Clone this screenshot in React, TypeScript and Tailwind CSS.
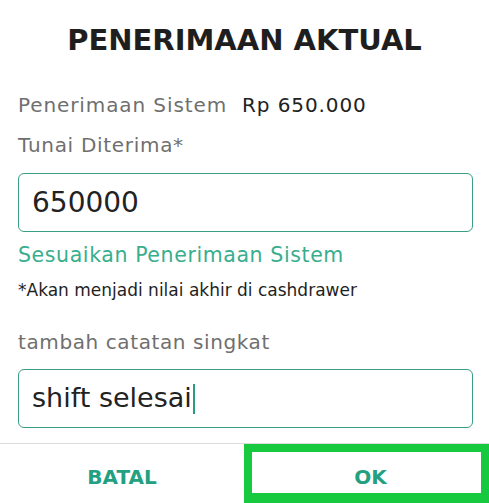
import React from "react";

export default function App() {
  const font = { fontFamily: '"DejaVu Sans", "Noto Sans", sans-serif' };
  return (
    <div className="w-[489px] h-[503px] bg-white flex flex-col overflow-hidden" style={font}>
      <div className="h-[85px] flex items-start justify-center pt-[26px]">
        <h1 className="text-[29px] leading-none font-bold text-[#1e1e1e]">PENERIMAAN AKTUAL</h1>
      </div>
      <div className="pl-[18px] pr-[16px] flex flex-col">
        <div className="flex gap-[15px] h-[40px] items-center">
          <span className="text-[20px] tracking-[0.9px] text-[#6f6f6f]">Penerimaan Sistem</span>
          <span className="text-[20px] tracking-[0.9px] text-[#222]">Rp 650.000</span>
        </div>
        <div className="text-[20px] tracking-[0.7px] text-[#6f6f6f] h-[40px] flex items-center">Tunai Diterima*</div>
        <div className="mt-[8px] h-[59px] border-[1.5px] border-[#3a9e85] rounded-[6px] flex items-center px-[13px]">
          <span className="text-[28px] text-[#222]">650000</span>
        </div>
        <div className="mt-[8px] text-[20.5px] tracking-[0.6px] text-[#38ae8d] h-[30px] flex items-center">Sesuaikan Penerimaan Sistem</div>
        <div className="mt-[10px] text-[17px] text-[#1f1f1f] h-[22px] flex items-center">*Akan menjadi nilai akhir di cashdrawer</div>
        <div className="mt-[25px] text-[20px] tracking-[0.6px] text-[#6f6f6f] h-[30px] flex items-center">tambah catatan singkat</div>
        <div className="mt-[12px] h-[59px] border-[1.5px] border-[#3a9e85] rounded-[6px] flex items-center px-[13px]">
          <span className="text-[27px] text-[#222]">shift selesai</span>
          <span className="w-[2px] h-[30px] bg-[#2a9d7f] ml-[1px]" />
        </div>
      </div>
      <div className="mt-auto border-t border-[#dcdcdc] h-[60px] flex">
        <div className="w-[244px] flex items-center justify-center pt-[6px]">
          <span className="text-[20px] font-bold text-[#23a07f]">BATAL</span>
        </div>
        <div className="flex-1 border-[8px] border-b-[10px] border-[#17c93f] flex items-center justify-center pt-[8px]">
          <span className="text-[20px] font-bold text-[#23a07f] pl-[8px]">OK</span>
        </div>
      </div>
    </div>
  );
}
